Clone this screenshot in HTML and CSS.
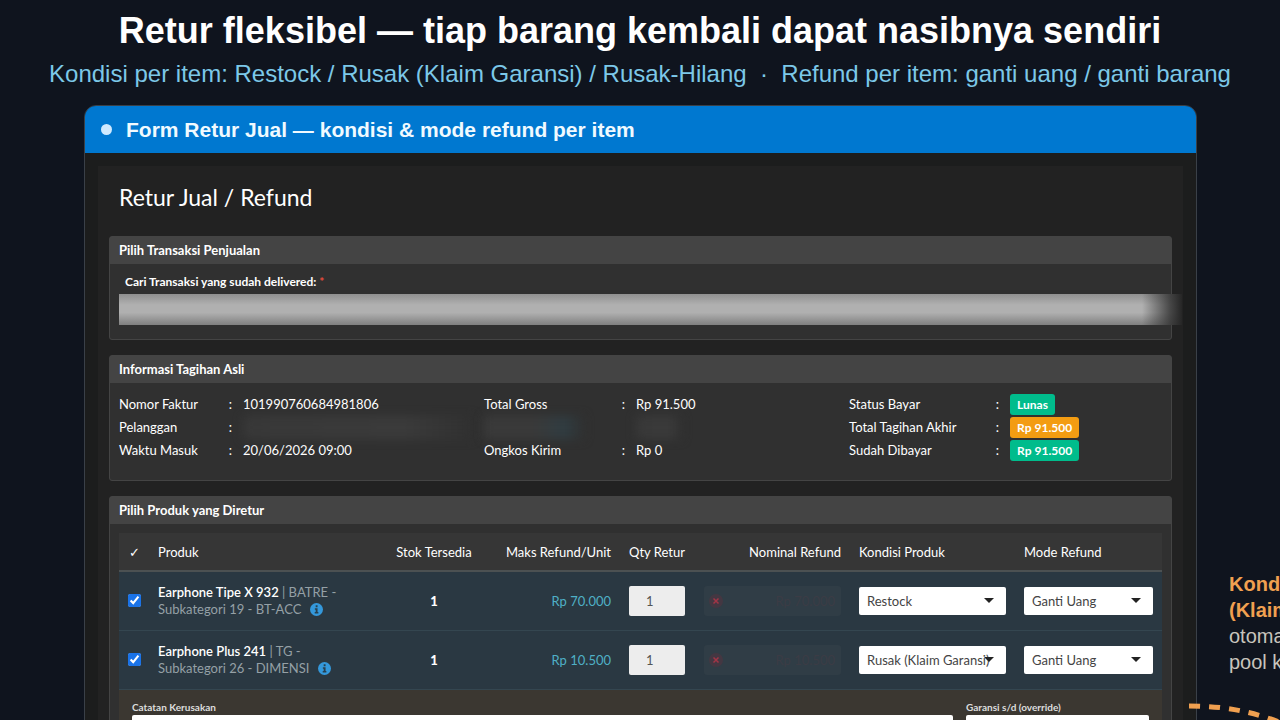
FILE: index.html
```html
<!DOCTYPE html>
<html lang="id">
<head>
    <meta charset="UTF-8">
    <meta name="viewport" content="width=device-width, initial-scale=1.0">
    <title>Retur Jual / Refund</title>
    <link rel="stylesheet" href="styles.css">
</head>
<body>
    <header class="intro">
        <h1>Retur fleksibel — tiap barang kembali dapat nasibnya sendiri</h1>
        <p>Kondisi per item: Restock / Rusak (Klaim Garansi) / Rusak-Hilang &nbsp;·&nbsp; Refund per item: ganti uang / ganti barang</p>
    </header>

    <div class="stage">
        <main class="window">
            <div class="window-bar">
                <span class="dot"></span>
                <h2>Form Retur Jual — kondisi &amp; mode refund per item</h2>
            </div>
            <div class="window-body">
                <div class="page">
                    <h3 class="page-title">Retur Jual / Refund</h3>

                    <section class="card">
                        <h4 class="card-header">Pilih Transaksi Penjualan</h4>
                        <div class="card-body search-body">
                            <label for="transaksi">Cari Transaksi yang sudah delivered: <span class="required">*</span></label>
                            <input type="text" id="transaksi" class="search-input">
                        </div>
                    </section>

                    <section class="card">
                        <h4 class="card-header">Informasi Tagihan Asli</h4>
                        <div class="card-body info">
                            <dl class="info-list">
                                <dt>Nomor Faktur</dt><dd>101990760684981806</dd>
                                <dt>Pelanggan</dt><dd><span class="smudge smudge-name"></span></dd>
                                <dt>Waktu Masuk</dt><dd>20/06/2026 09:00</dd>
                            </dl>
                            <dl class="info-list info-total">
                                <dt>Total Gross</dt><dd>Rp 91.500</dd>
                                <dt class="hidden-label"><span class="smudge smudge-label"></span></dt><dd><span class="smudge smudge-value"></span></dd>
                                <dt>Ongkos Kirim</dt><dd>Rp 0</dd>
                            </dl>
                            <dl class="info-list info-status">
                                <dt>Status Bayar</dt><dd><span class="badge badge-success">Lunas</span></dd>
                                <dt>Total Tagihan Akhir</dt><dd><span class="badge badge-warning">Rp 91.500</span></dd>
                                <dt>Sudah Dibayar</dt><dd><span class="badge badge-success">Rp 91.500</span></dd>
                            </dl>
                        </div>
                    </section>

                    <section class="card">
                        <h4 class="card-header">Pilih Produk yang Diretur</h4>
                        <div class="card-body">
                            <table class="products">
                                <colgroup>
                                    <col class="col-check">
                                    <col>
                                    <col class="col-stock">
                                    <col class="col-max">
                                    <col class="col-qty">
                                    <col class="col-nominal">
                                    <col class="col-condition">
                                    <col class="col-mode">
                                </colgroup>
                                <thead>
                                    <tr>
                                        <th class="center">✓</th>
                                        <th>Produk</th>
                                        <th class="center">Stok Tersedia</th>
                                        <th class="right">Maks Refund/Unit</th>
                                        <th>Qty Retur</th>
                                        <th class="right">Nominal Refund</th>
                                        <th>Kondisi Produk</th>
                                        <th>Mode Refund</th>
                                    </tr>
                                </thead>
                                <tbody>
                                    <tr class="item">
                                        <td class="center"><input type="checkbox" class="check" aria-label="Pilih Earphone Tipe X 932" checked></td>
                                        <td class="name">
                                            <strong>Earphone Tipe X 932</strong> | BATRE -<br>Subkategori 19 - BT-ACC
                                            <svg class="info-icon" viewBox="0 0 16 16"><circle cx="8" cy="8" r="8" fill="#3498db"/><path d="M7 2.8h2.3v2.3H7zM6 6.4h3.3v4.8h1V13H5.800v-1.800H7V8.200H6z" fill="#28404f"/></svg>
                                        </td>
                                        <td class="center stock">1</td>
                                        <td class="right price">Rp 70.000</td>
                                        <td><input type="text" class="qty" value="1" aria-label="Qty retur"></td>
                                        <td>
                                            <div class="nominal">
                                                <svg class="locked" viewBox="0 0 16 16"><circle cx="8" cy="8" r="7" fill="#65303d" opacity="0.4"/><path d="M5.500 5.500l5 5M10.500 5.500l-5 5" stroke="#a23546" stroke-width="1.500"/></svg>
                                                <input type="text" value="Rp 70.000" aria-label="Nominal refund" disabled>
                                            </div>
                                        </td>
                                        <td><div class="select"><select aria-label="Kondisi produk"><option>Restock</option><option>Rusak (Klaim Garansi)</option><option>Rusak-Hilang</option></select></div></td>
                                        <td><div class="select"><select aria-label="Mode refund"><option>Ganti Uang</option><option>Ganti Barang</option></select></div></td>
                                    </tr>
                                    <tr class="item">
                                        <td class="center"><input type="checkbox" class="check" aria-label="Pilih Earphone Plus 241" checked></td>
                                        <td class="name">
                                            <strong>Earphone Plus 241</strong> | TG -<br>Subkategori 26 - DIMENSI
                                            <svg class="info-icon" viewBox="0 0 16 16"><circle cx="8" cy="8" r="8" fill="#3498db"/><path d="M7 2.8h2.3v2.3H7zM6 6.4h3.3v4.8h1V13H5.800v-1.800H7V8.200H6z" fill="#28404f"/></svg>
                                        </td>
                                        <td class="center stock">1</td>
                                        <td class="right price">Rp 10.500</td>
                                        <td><input type="text" class="qty" value="1" aria-label="Qty retur"></td>
                                        <td>
                                            <div class="nominal">
                                                <svg class="locked" viewBox="0 0 16 16"><circle cx="8" cy="8" r="7" fill="#65303d" opacity="0.4"/><path d="M5.500 5.500l5 5M10.500 5.500l-5 5" stroke="#a23546" stroke-width="1.500"/></svg>
                                                <input type="text" value="Rp 10.500" aria-label="Nominal refund" disabled>
                                            </div>
                                        </td>
                                        <td><div class="select"><select aria-label="Kondisi produk"><option>Restock</option><option selected>Rusak (Klaim Garansi)</option><option>Rusak-Hilang</option></select></div></td>
                                        <td><div class="select"><select aria-label="Mode refund"><option>Ganti Uang</option><option>Ganti Barang</option></select></div></td>
                                    </tr>
                                    <tr class="damage">
                                        <td colspan="8">
                                            <div class="damage-fields">
                                                <div class="field">
                                                    <label for="catatan">Catatan Kerusakan</label>
                                                    <input type="text" id="catatan">
                                                </div>
                                                <div class="field">
                                                    <label for="garansi">Garansi s/d (override)</label>
                                                    <input type="text" id="garansi">
                                                </div>
                                            </div>
                                        </td>
                                    </tr>
                                </tbody>
                            </table>
                        </div>
                    </section>
                </div>
            </div>
        </main>

        <aside class="note">
            <strong>Kondisi Rusak<br>(Klaim Garansi)</strong><br>otomatis masuk<br>pool klaim
        </aside>
        <svg class="note-line" viewBox="0 0 120 60">
            <path d="M0 7C40 7 70 14 105 29" fill="none" stroke="#f0a050" stroke-width="5" stroke-dasharray="11 9"/>
        </svg>
    </div>
</body>
</html>
```
FILE: styles.css
```css
* {
    box-sizing: border-box;
}
body {
    margin: 0;
    height: 100vh;
    overflow: hidden;
    background: #0f141e;
    color: #fff;
    font-family: "Liberation Sans", Arial, sans-serif;
}
h1, h2, h3, h4, p, dl, dd {
    margin: 0;
}

/* Intro */
.intro {
    padding-top: 10px;
    text-align: center;
    white-space: nowrap;
}
.intro h1 {
    font-size: 36px;
    line-height: 42px;
}
.intro p {
    margin-top: 8px;
    color: #7cc8e8;
    font-size: 24px;
    line-height: 28px;
}

/* Window */
.stage {
    position: relative;
    display: flex;
    margin-top: 17px;
    padding-left: 84px;
}
.window {
    flex: 1;
    min-width: 0;
    border: 1px solid #3a4048;
    border-radius: 12px;
    background: #1c1d1d;
}
.window-bar {
    display: flex;
    align-items: center;
    gap: 14px;
    height: 47px;
    padding: 0 16px;
    background: #0078d0;
    border-radius: 11px 11px 0 0;
}
.window-bar h2 {
    font-size: 21px;
    color: #f0faff;
}
.dot {
    width: 11px;
    height: 11px;
    border-radius: 50%;
    background: #cfeaff;
}
.window-body {
    padding: 13px;
    font-family: Lato, sans-serif;
    font-size: 13px;
}
.page {
    padding: 14px 11px;
    background: #222;
}
.page-title {
    margin-bottom: 22px;
    padding-left: 10px;
    font-size: 23px;
    line-height: 34px;
    font-weight: 400;
}

/* Cards */
.card {
    margin-bottom: 15px;
    border: 1px solid #444;
    border-radius: 3px;
    background: #303030;
}
.card-header {
    padding: 0 9px;
    background: #444;
    font-size: 13px;
    line-height: 27px;
}
.card-body {
    padding: 9px;
}
.search-body label {
    display: block;
    padding-left: 6px;
    font-weight: 700;
    font-size: 12px;
    line-height: 18px;
}
.required {
    color: #e74c3c;
}
.search-input {
    display: block;
    width: calc(100% + 20px);
    height: 31px;
    margin: 3px 0 5px;
    border: 0;
    background:
        linear-gradient(90deg, transparent calc(100% - 40px), #303030d0 calc(100% - 12px), #262626),
        linear-gradient(#909090, #b0b0b0 35%, #b0b0b0 60%, #808080);
}

/* Invoice info */
.info {
    display: grid;
    grid-template-columns: 35fr 35fr 30fr;
    padding-top: 10px;
    padding-bottom: 18px;
}
.info-list {
    display: grid;
    grid-template-columns: 124px 1fr;
    line-height: 23px;
}
.info-total {
    grid-template-columns: 152px 1fr;
}
.info-status {
    grid-template-columns: 161px 1fr;
}
.info-list dt {
    display: flex;
    justify-content: space-between;
    padding-right: 11px;
}
.info-list dt::after {
    content: ":";
}
.info-list .hidden-label::after {
    content: none;
}
.info-list dd {
    height: 23px;
}
.smudge {
    display: block;
    height: 23px;
    background: linear-gradient(90deg, #383838, #3b3b3b 70%, #303030);
    filter: blur(5px);
}
.smudge-name {
    width: 230px;
}
.smudge-label {
    width: 100px;
    background: linear-gradient(90deg, #3a3a3a, #3a3a3a 50%, #303d42 80%, #303030);
}
.smudge-value {
    width: 46px;
}
.badge {
    display: inline-block;
    padding: 0 7px;
    border-radius: 3px;
    font-size: 12px;
    line-height: 21px;
    font-weight: 700;
}
.badge-success {
    background: #00bc8c;
}
.badge-warning {
    background: #f39c12;
}

/* Products */
.products {
    width: 100%;
    table-layout: fixed;
    border-collapse: collapse;
}
.col-check {
    width: 30px;
}
.col-stock {
    width: 94px;
}
.col-max {
    width: 139px;
}
.col-qty {
    width: 75px;
}
.col-nominal {
    width: 155px;
}
.col-condition {
    width: 165px;
}
.col-mode {
    width: 147px;
}
.products th {
    height: 38px;
    padding: 0 9px;
    border-bottom: 2px solid #4c5152;
    background: #363636;
    font-weight: 400;
    text-align: left;
    white-space: nowrap;
}
.products td {
    padding: 0 9px;
}
.products .center {
    padding: 0;
    text-align: center;
}
.products .right {
    text-align: right;
}
.item {
    height: 59px;
    border-bottom: 1px solid #344650;
    background: #2a3842;
}
.check {
    display: block;
    width: 13px;
    height: 13px;
    margin: 0 auto;
    accent-color: #1a73e8;
}
.name {
    color: #95a0a6;
    line-height: 17px;
}
.name strong {
    color: #fff;
    font-weight: 600;
}
.info-icon {
    width: 13px;
    height: 13px;
    margin-left: 5px;
    vertical-align: -2px;
}
.stock {
    font-weight: 900;
}
.price {
    color: #4fb0c6;
}
.qty {
    display: block;
    width: 56px;
    height: 30px;
    padding: 0 17px;
    border: 0;
    border-radius: 2px;
    background: #ededed;
    color: #555;
    font: inherit;
}
.nominal {
    display: flex;
    align-items: center;
    height: 30px;
    padding: 0 4px;
    border-radius: 3px;
    background: #303d46;
}
.locked {
    flex: none;
    width: 16px;
    height: 16px;
}
.nominal input {
    flex: 1;
    min-width: 0;
    border: 0;
    background: none;
    color: #3b3c45;
    font: inherit;
    text-align: right;
}
.select {
    position: relative;
}
.select select {
    display: block;
    width: 100%;
    height: 28px;
    padding: 0 8px;
    border: 0;
    border-radius: 2px;
    background: #fff;
    color: #444;
    font: inherit;
    appearance: none;
}
.select::after {
    content: "";
    position: absolute;
    top: 11px;
    right: 12px;
    border: 5px solid transparent;
    border-top-color: #222;
    border-bottom: 0;
    pointer-events: none;
}

/* Damage details */
.damage {
    border-top: 1px dashed #7d7448;
    background: #3b3731;
}
.products .damage td {
    padding: 9px 13px;
}
.damage-fields {
    display: grid;
    grid-template-columns: 1fr 183px;
    gap: 13px;
}
.field label {
    display: block;
    color: #ddd;
    font-size: 10px;
    font-weight: 700;
    line-height: 16px;
}
.field input {
    display: block;
    width: 100%;
    height: 30px;
    border: 0;
    border-radius: 2px;
    background: #fff;
}

/* Side note */
.note {
    flex: none;
    width: 83px;
    padding: 466px 0 0 32px;
    color: #c8c4bc;
    font-size: 20px;
    line-height: 26px;
    white-space: nowrap;
}
.note strong {
    color: #f0a050;
}
.note-line {
    position: absolute;
    top: 594px;
    right: -29px;
    width: 120px;
    height: 60px;
}
```
